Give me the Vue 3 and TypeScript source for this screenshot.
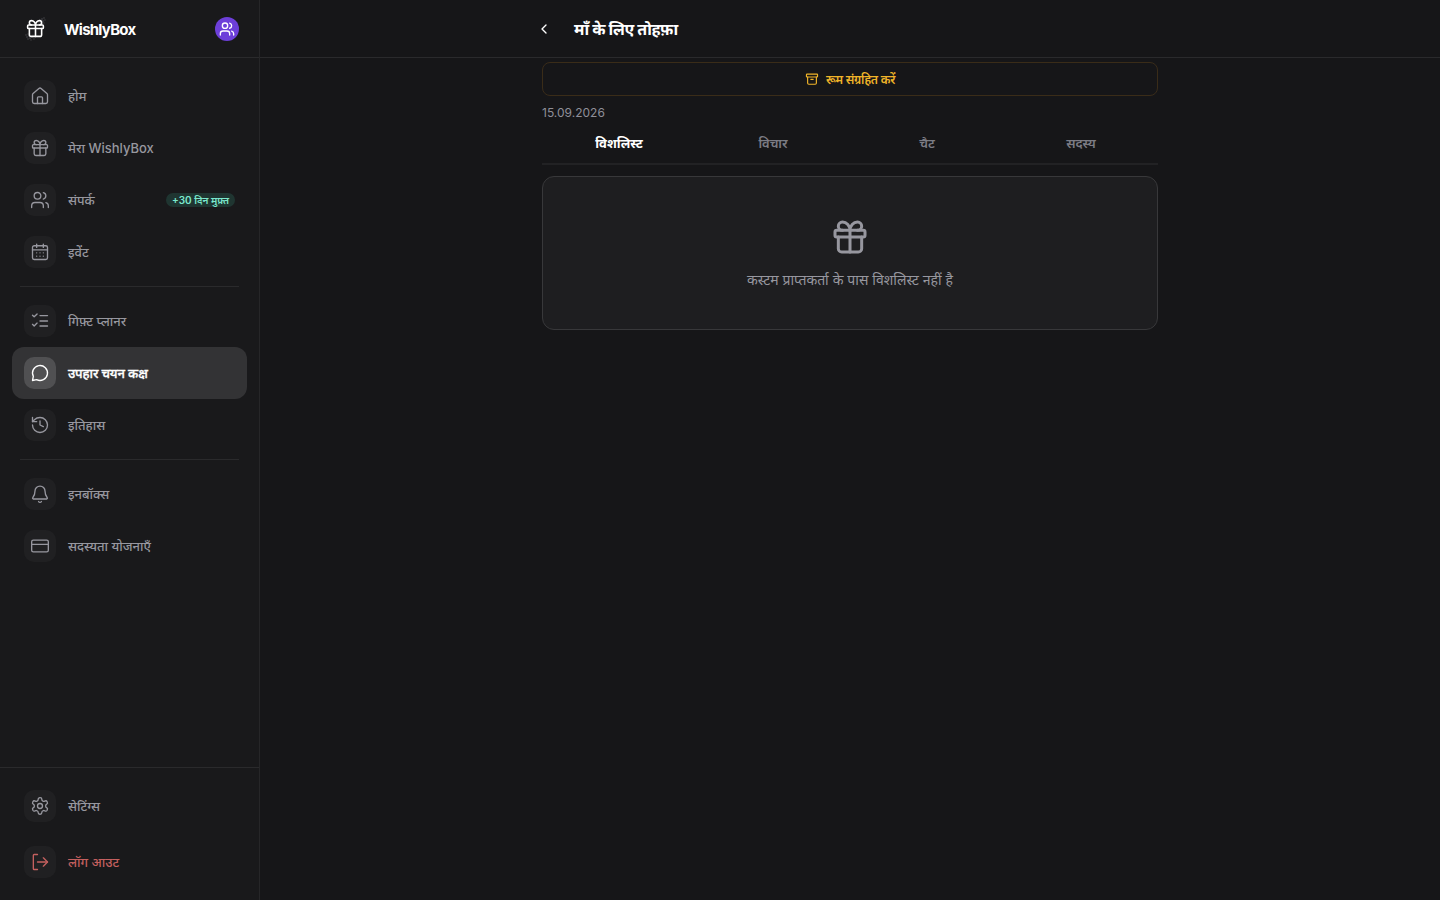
<template>
  <div class="app">
    <aside class="sidebar">
      <div class="brand">
        <div class="brand-left">
          <div class="logo">
            <svg class="sparkle" width="40" height="40" viewBox="0 0 40 40">
              <circle v-for="(d, i) in sparkleDots" :key="i" :cx="d[0]" :cy="d[1]" r="0.7" fill="#9a9aa0" :opacity="d[2]" />
            </svg>
            <svg class="logo-gift" width="21" height="21" viewBox="0 0 24 24" fill="none" stroke="currentColor" stroke-width="1.8" stroke-linecap="round" stroke-linejoin="round">
              <path v-for="p in icons.gift" :key="p" :d="p" />
            </svg>
          </div>
          <span class="brand-name">WishlyBox</span>
        </div>
        <button class="avatar">
          <svg width="16" height="16" viewBox="0 0 24 24" fill="none" stroke="currentColor" stroke-width="2" stroke-linecap="round" stroke-linejoin="round">
            <path v-for="p in icons.users" :key="p" :d="p" />
          </svg>
        </button>
      </div>

      <nav class="nav">
        <template v-for="(group, g) in navGroups" :key="g">
          <div v-if="g > 0" class="divider"></div>
          <a v-for="item in group" :key="item.label" class="nav-item" :class="{ active: item.active }">
            <span class="nav-icon">
              <svg width="20" height="20" viewBox="0 0 24 24" fill="none" stroke="currentColor" stroke-width="1.6" stroke-linecap="round" stroke-linejoin="round">
                <path v-for="p in icons[item.icon]" :key="p" :d="p" />
              </svg>
            </span>
            <span class="nav-label">{{ item.label }}</span>
            <span v-if="item.badge" class="badge">{{ item.badge }}</span>
          </a>
        </template>
      </nav>

      <div class="sidebar-foot">
        <a class="nav-item">
          <span class="nav-icon">
            <svg width="20" height="20" viewBox="0 0 24 24" fill="none" stroke="currentColor" stroke-width="1.6" stroke-linecap="round" stroke-linejoin="round">
              <path v-for="p in icons.settings" :key="p" :d="p" />
            </svg>
          </span>
          <span class="nav-label">सेटिंग्स</span>
        </a>
        <a class="nav-item logout">
          <span class="nav-icon">
            <svg width="20" height="20" viewBox="0 0 24 24" fill="none" stroke="currentColor" stroke-width="1.6" stroke-linecap="round" stroke-linejoin="round">
              <path v-for="p in icons.logout" :key="p" :d="p" />
            </svg>
          </span>
          <span class="nav-label">लॉग आउट</span>
        </a>
      </div>
    </aside>

    <main class="main">
      <header class="topbar">
        <div class="topbar-inner">
          <button class="back">
            <svg width="16" height="16" viewBox="0 0 24 24" fill="none" stroke="currentColor" stroke-width="2" stroke-linecap="round" stroke-linejoin="round">
              <path d="m15 18-6-6 6-6" />
            </svg>
          </button>
          <h1 class="title">माँ के लिए तोहफ़ा</h1>
        </div>
      </header>

      <div class="content">
        <button class="archive">
          <svg width="14" height="14" viewBox="0 0 24 24" fill="none" stroke="currentColor" stroke-width="2" stroke-linecap="round" stroke-linejoin="round">
            <rect x="2.5" y="3.5" width="19" height="5" rx="1" />
            <path d="M4.5 8.5V19a2 2 0 0 0 2 2h11a2 2 0 0 0 2-2V8.5" />
            <path d="M10 12.5h4" />
          </svg>
          <span>रूम संग्रहित करें</span>
        </button>
        <div class="date">15.09.2026</div>

        <div class="tabs">
          <button v-for="(tab, i) in tabs" :key="tab" class="tab" :class="{ active: i === 0 }">{{ tab }}</button>
        </div>

        <section class="empty">
          <svg width="40" height="40" viewBox="0 0 24 24" fill="none" stroke="currentColor" stroke-width="1.8" stroke-linecap="round" stroke-linejoin="round">
            <path v-for="p in icons.gift" :key="p" :d="p" />
          </svg>
          <p>कस्टम प्राप्तकर्ता के पास विशलिस्ट नहीं है</p>
        </section>
      </div>
    </main>
  </div>
</template>

<script setup lang="ts">
type IconName = 'home' | 'gift' | 'users' | 'calendar' | 'list' | 'chat' | 'history' | 'bell' | 'card' | 'settings' | 'logout'

interface NavItem {
  label: string
  icon: IconName
  active?: boolean
  badge?: string
}

const icons: Record<IconName, string[]> = {
  home: [
    'M15 21v-7a1 1 0 0 0-1-1h-4a1 1 0 0 0-1 1v7',
    'M3 10.5a2 2 0 0 1 .7-1.5l7-6a2 2 0 0 1 2.6 0l7 6a2 2 0 0 1 .7 1.5V19a2 2 0 0 1-2 2H5a2 2 0 0 1-2-2z',
  ],
  gift: [
    'M4 8h16a1 1 0 0 1 1 1v2a1 1 0 0 1-1 1H4a1 1 0 0 1-1-1V9a1 1 0 0 1 1-1z',
    'M12 8v13',
    'M19 12v7a2 2 0 0 1-2 2H7a2 2 0 0 1-2-2v-7',
    'M7.5 8a2.5 2.5 0 0 1 0-5C10 3 12 5.5 12 8c0-2.5 2-5 4.5-5a2.5 2.5 0 0 1 0 5',
  ],
  users: [
    'M16 21v-2a4 4 0 0 0-4-4H6a4 4 0 0 0-4 4v2',
    'M9 11a4 4 0 1 0 0-8 4 4 0 0 0 0 8z',
    'M22 21v-2a4 4 0 0 0-3-3.87',
    'M16 3.13a4 4 0 0 1 0 7.75',
  ],
  calendar: [
    'M5 4.5h14a2 2 0 0 1 2 2V19a2 2 0 0 1-2 2H5a2 2 0 0 1-2-2V6.5a2 2 0 0 1 2-2z',
    'M8 2.5v4', 'M16 2.5v4', 'M3 9.5h18',
    'M8 13h.01', 'M12 13h.01', 'M16 13h.01', 'M8 17h.01', 'M12 17h.01', 'M16 17h.01',
  ],
  list: [
    'm3 5 2 2 3.5-3.5',
    'm3 16 2 2 3.5-3.5',
    'M12 5.5h9', 'M12 12h9', 'M12 18h9',
  ],
  chat: ['M7.9 20A9 9 0 1 0 4 16.1L3 21z'],
  history: [
    'M3 12a9 9 0 1 0 9-9 9.75 9.75 0 0 0-6.74 2.74L3 8',
    'M3 3v5h5',
    'M12 7v5l4 2',
  ],
  bell: [
    'M10.3 21a1.9 1.9 0 0 0 3.4 0',
    'M3.3 16.5A1 1 0 0 0 4 18h16a1 1 0 0 0 .7-1.5C19.4 15 18 13 18 8.5a6 6 0 0 0-12 0c0 4.5-1.4 6.5-2.7 8',
  ],
  card: [
    'M4 5h16a2 2 0 0 1 2 2v10a2 2 0 0 1-2 2H4a2 2 0 0 1-2-2V7a2 2 0 0 1 2-2z',
    'M2 10h20',
  ],
  settings: [
    'M12.2 2h-.4a2 2 0 0 0-2 2v.2a2 2 0 0 1-1 1.7l-.4.3a2 2 0 0 1-2 0l-.2-.1a2 2 0 0 0-2.7.7l-.2.4a2 2 0 0 0 .7 2.7l.2.1a2 2 0 0 1 1 1.7v.5a2 2 0 0 1-1 1.7l-.2.1a2 2 0 0 0-.7 2.7l.2.4a2 2 0 0 0 2.7.7l.2-.1a2 2 0 0 1 2 0l.4.3a2 2 0 0 1 1 1.7v.2a2 2 0 0 0 2 2h.4a2 2 0 0 0 2-2v-.2a2 2 0 0 1 1-1.7l.4-.3a2 2 0 0 1 2 0l.2.1a2 2 0 0 0 2.7-.7l.2-.4a2 2 0 0 0-.7-2.7l-.2-.1a2 2 0 0 1-1-1.7v-.5a2 2 0 0 1 1-1.7l.2-.1a2 2 0 0 0 .7-2.7l-.2-.4a2 2 0 0 0-2.7-.7l-.2.1a2 2 0 0 1-2 0l-.4-.3a2 2 0 0 1-1-1.7V4a2 2 0 0 0-2-2z',
    'M12 15a3 3 0 1 0 0-6 3 3 0 0 0 0 6z',
  ],
  logout: [
    'M9 21H5a1 1 0 0 1-1-1V4a1 1 0 0 1 1-1h4',
    'm16 17 5-5-5-5',
    'M21 12H9',
  ],
}

const navGroups: NavItem[][] = [
  [
    { label: 'होम', icon: 'home' },
    { label: 'मेरा WishlyBox', icon: 'gift' },
    { label: 'संपर्क', icon: 'users', badge: '+30 दिन मुफ़्त' },
    { label: 'इवेंट', icon: 'calendar' },
  ],
  [
    { label: 'गिफ़्ट प्लानर', icon: 'list' },
    { label: 'उपहार चयन कक्ष', icon: 'chat', active: true },
    { label: 'इतिहास', icon: 'history' },
  ],
  [
    { label: 'इनबॉक्स', icon: 'bell' },
    { label: 'सदस्यता योजनाएँ', icon: 'card' },
  ],
]

const tabs = ['विशलिस्ट', 'विचार', 'चैट', 'सदस्य']

// faint specks round the logo
const sparkleDots: [number, number, number][] = [
  [10, 26, 0.4], [11, 28, 0.5], [12, 30, 0.4], [13, 27, 0.5], [14, 29, 0.6], [15, 31, 0.3], [16, 28, 0.4], [18, 30, 0.3], [12, 25, 0.3], [17, 26, 0.2],
  [23, 14, 0.3], [24, 11, 0.4], [25, 13, 0.5], [26, 10, 0.5], [27, 12, 0.5], [28, 9, 0.4], [28, 14, 0.3], [29, 11, 0.3], [26, 15, 0.3],
]
</script>

<style>
html,
body {
  margin: 0;
  background: #161618;
}
</style>

<style scoped>
.app {
  display: flex;
  height: 900px;
  background: #161618;
  color: #fff;
  font-family: Inter, "Noto Sans", "DejaVu Sans", sans-serif;
  overflow: hidden;
}

.sidebar {
  width: 260px;
  flex-shrink: 0;
  display: flex;
  flex-direction: column;
  background: #19191b;
  border-right: 1px solid #262628;
  box-sizing: border-box;
}

.brand {
  height: 58px;
  box-sizing: border-box;
  display: flex;
  align-items: center;
  justify-content: space-between;
  padding: 0 20px 0 24px;
  border-bottom: 1px solid #2a2a2c;
}

.brand-left {
  display: flex;
  align-items: center;
  gap: 16px;
}

.logo {
  position: relative;
  width: 24px;
  height: 24px;
  color: #fff;
  display: flex;
  align-items: center;
  justify-content: center;
}

.logo-gift {
  position: relative;
  display: block;
  margin-left: -1px;
}

.sparkle {
  position: absolute;
  left: -8px;
  top: -8px;
}

.brand-name {
  font-size: 15px;
  line-height: 20px;
  margin-top: 2px;
  font-weight: 700;
  letter-spacing: -0.75px;
}

.avatar {
  width: 24px;
  height: 24px;
  padding: 0;
  border: 0;
  border-radius: 50%;
  background: #6d3fd9;
  color: #fff;
  display: flex;
  align-items: center;
  justify-content: center;
}

.nav {
  flex: 1;
  padding: 12px 12px 0;
}

.divider {
  height: 1px;
  margin: 8px 8px;
  background: #2a2a2c;
}

.nav-item {
  height: 52px;
  box-sizing: border-box;
  display: flex;
  align-items: center;
  gap: 12px;
  padding: 0 12px;
  border-radius: 12px;
  color: #97979f;
  font-size: 13px;
  font-weight: 500;
}

.nav-item.active {
  background: #333335;
  color: #fff;
  letter-spacing: -0.15px;
  -webkit-text-stroke: 0.35px #fff;
}

.nav-icon {
  width: 32px;
  height: 32px;
  flex-shrink: 0;
  border-radius: 10px;
  background: #202022;
  display: flex;
  align-items: center;
  justify-content: center;
}

.nav-item.active .nav-icon {
  background: #505052;
}

.nav-label {
  flex: 1;
  white-space: nowrap;
}

.badge {
  padding: 0 6px;
  height: 14px;
  line-height: 14px;
  border-radius: 7px;
  background: #1f3531;
  color: #7be8cd;
  font-size: 10px;
  font-weight: 600;
}

.sidebar-foot {
  border-top: 1px solid #2a2a2c;
  padding: 12px;
  display: flex;
  flex-direction: column;
  gap: 4px;
}

.nav-item.logout {
  color: #c4605f;
}

.main {
  flex: 1;
  min-width: 0;
  display: flex;
  flex-direction: column;
}

.topbar {
  height: 58px;
  flex-shrink: 0;
  box-sizing: border-box;
  border-bottom: 1px solid #2a2a2c;
  display: flex;
  justify-content: center;
}

.topbar-inner {
  width: 616px;
  display: flex;
  align-items: center;
  gap: 28px;
}

.back {
  width: 4px;
  flex-shrink: 0;
  padding: 0;
  border: 0;
  background: none;
  color: #fff;
  display: flex;
  justify-content: center;
}

.back svg {
  flex-shrink: 0;
}

.title {
  margin: 0;
  font-size: 16px;
  font-weight: 700;
  letter-spacing: -0.4px;
}

.content {
  width: 616px;
  margin: 0 auto;
  padding-top: 4px;
}

.archive {
  width: 100%;
  height: 34px;
  box-sizing: border-box;
  border: 1px solid #3a2c18;
  border-radius: 8px;
  background: none;
  color: #f0b429;
  font-family: inherit;
  font-size: 12px;
  font-weight: 600;
  letter-spacing: -0.2px;
  display: flex;
  align-items: center;
  justify-content: center;
  gap: 7px;
}

.date {
  margin-top: 8px;
  font-size: 12px;
  line-height: 18px;
  color: #8f8f98;
}

.tabs {
  display: grid;
  grid-template-columns: repeat(4, 1fr);
  border-bottom: 2px solid #222224;
  margin-top: 2px;
}

.tab {
  height: 39px;
  padding: 0 0 1px;
  border: 0;
  background: none;
  color: #7c7c84;
  font-family: inherit;
  font-size: 13px;
  font-weight: 600;
}

.tab.active {
  color: #fff;
  font-weight: 700;
}

.empty {
  margin-top: 11px;
  height: 154px;
  box-sizing: border-box;
  border: 1px solid #38383a;
  border-radius: 12px;
  background: #1e1e20;
  display: flex;
  flex-direction: column;
  align-items: center;
  padding-top: 40px;
  color: #97979f;
}

.empty p {
  margin: 13px 0 0;
  font-size: 14px;
  line-height: 20px;
}
</style>
